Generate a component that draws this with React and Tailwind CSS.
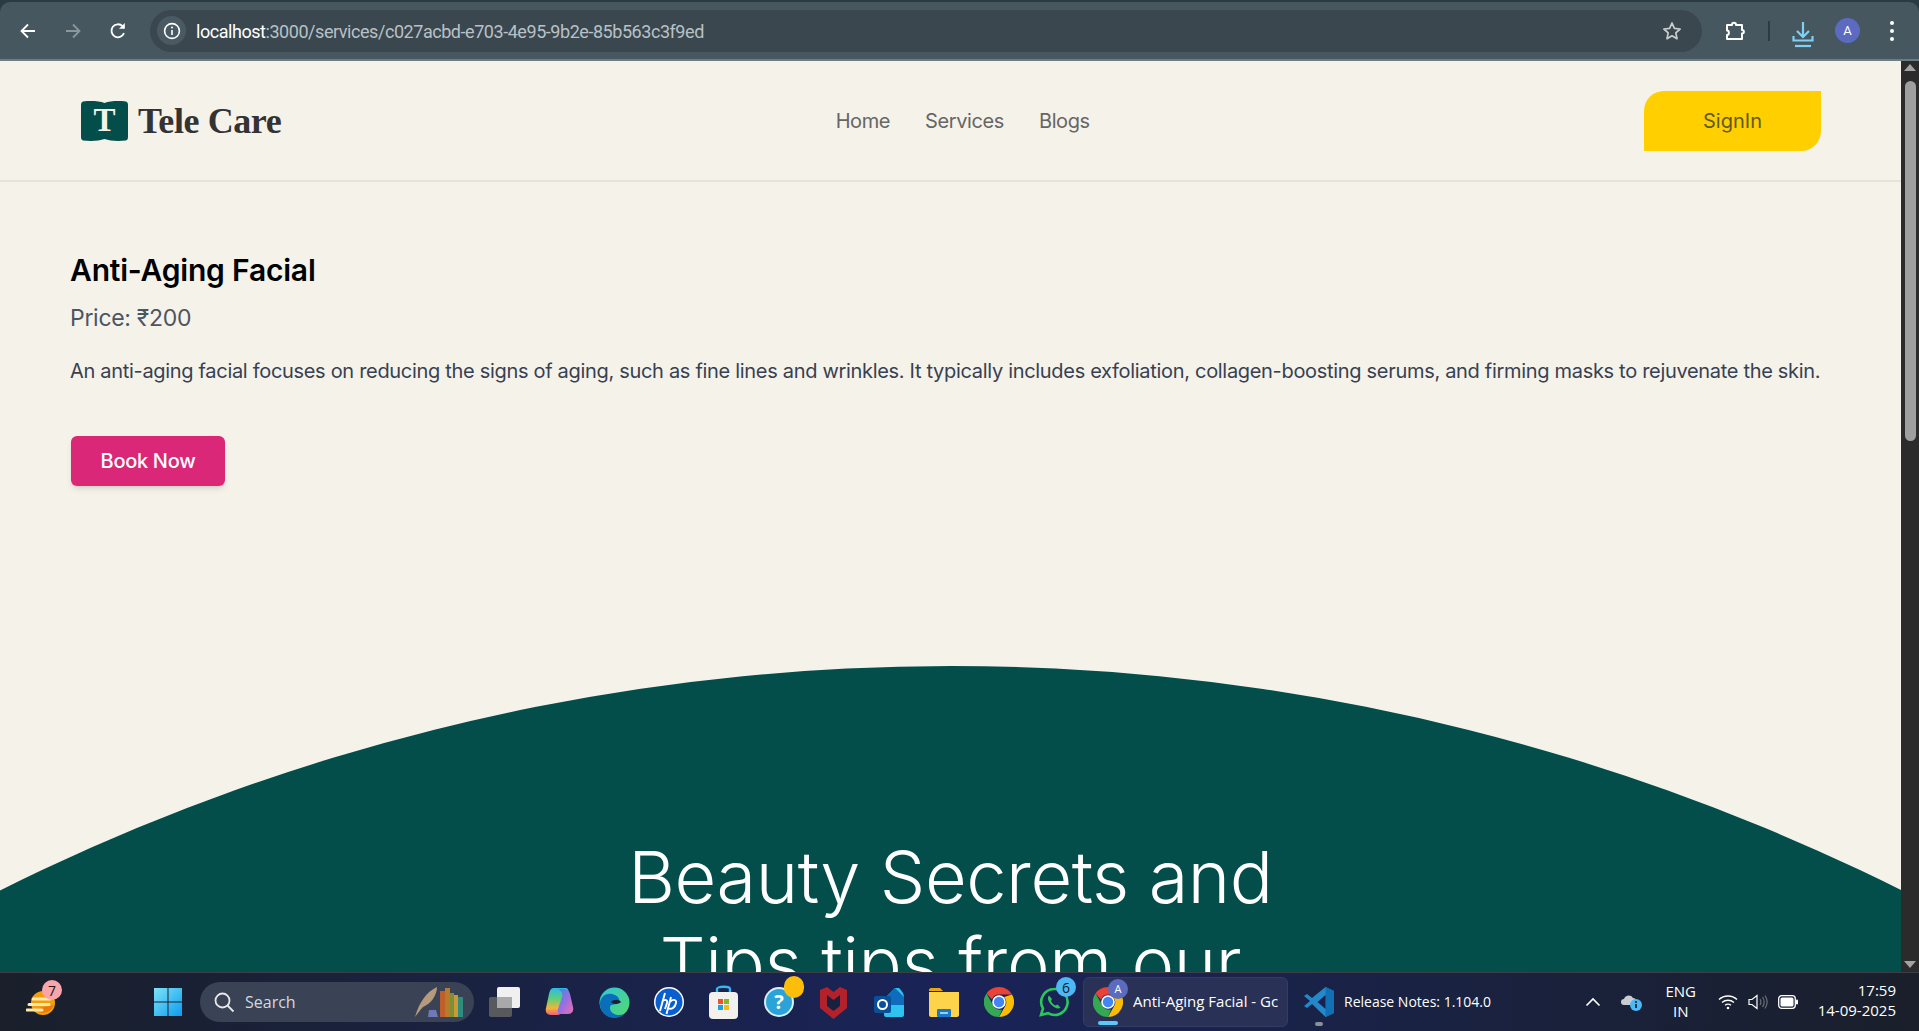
import React from "react";

// chrome toolbar icons
const BackIcon = ({ color = "#ffffff" }) => (
  <svg width="18" height="18" viewBox="0 0 18 18" fill="none" stroke={color} strokeWidth="1.8">
    <path d="M16 9H3M9 2.5 2.5 9 9 15.5" />
  </svg>
);

const ForwardIcon = () => (
  <svg width="18" height="18" viewBox="0 0 18 18" fill="none" stroke="#8b979d" strokeWidth="1.8">
    <path d="M2 9h13M9 2.5 15.5 9 9 15.5" />
  </svg>
);

const ReloadIcon = () => (
  <svg width="18" height="18" viewBox="0 0 18 18" fill="none" stroke="#ffffff" strokeWidth="1.8">
    <path d="M15 11.200A6.500 6.500 0 1 1 13.600 4.200L15 5.800" />
    <path d="M15.800 1v5.800H10" fill="#ffffff" stroke="none" />
  </svg>
);

const InfoIcon = () => (
  <svg width="18" height="18" viewBox="0 0 18 18" fill="none" stroke="#ffffff" strokeWidth="1.6">
    <circle cx="9" cy="9" r="7.4" />
    <path d="M9 8v5" />
    <circle cx="9" cy="5.4" r="1" fill="#ffffff" stroke="none" />
  </svg>
);

const StarIcon = () => (
  <svg width="20" height="20" viewBox="0 0 20 20" fill="none" stroke="#c9cdcf" strokeWidth="1.7" strokeLinejoin="round">
    <path d="m10 2 2.4 5.4 5.7.6-4.3 3.9 1.2 5.8L10 14.8l-5 2.9 1.2-5.8L1.900 8l5.700-.6Z" />
  </svg>
);

const PuzzleIcon = () => (
  <svg width="22" height="22" viewBox="0 0 22 22" fill="none" stroke="#ffffff" strokeWidth="2" strokeLinejoin="round">
    <path d="M3 5h5c0-3 4-3 4 0h6v5c2.500 0 2.500 3.500 0 3.500V19H3v-4c2.500 0 2.500-4.500 0-4.500Z" />
  </svg>
);

const DownloadIcon = () => (
  <svg width="24" height="28" viewBox="0 0 24 28" fill="none" stroke="#7fd0f5" strokeWidth="2.200">
    <path d="M12 2v14M6 11l6 6 6-6" />
    <path d="M2.500 16v4.500h19V16" />
    <path d="M4 26h16" />
  </svg>
);

// taskbar icons
const WeatherIcon = () => (
  <div className="relative w-[30px] h-[30px]">
    <svg width="30" height="30" viewBox="0 0 30 30">
      <circle cx="17" cy="16" r="12" fill="#f59e0b" />
      <path d="M8 22a12 12 0 0 0 20-4Z" fill="#ea7a0b" />
      <path d="M7 12h17M3 17.500h20M1 23h15" stroke="#fde9a9" strokeWidth="3" strokeLinecap="round" />
    </svg>
    <div className="absolute top-[-7px] right-[-6px] w-[20px] h-[20px] rounded-full bg-[#f8a5ab] flex items-center justify-center text-[14px] text-[#1a1a1a] font-['Open_Sans',sans-serif]">7</div>
  </div>
);

const WindowsIcon = () => (
  <svg width="30" height="30" viewBox="0 0 30 30">
    <defs>
      <linearGradient id="win" x1="0" y1="0" x2="1" y2="1">
        <stop offset="0" stopColor="#7ee3f7" />
        <stop offset="1" stopColor="#0c9cf0" />
      </linearGradient>
    </defs>
    <path d="M1 1h13.500v13.500H1ZM15.500 1H29v13.500H15.500ZM1 15.500h13.500V29H1ZM15.500 15.500H29V29H15.500Z" fill="url(#win)" />
  </svg>
);

const QuillBooks = () => (
  <svg width="50" height="32" viewBox="0 0 50 32">
    <path d="M1 31C5 17 12 6 23 1c0 8-6 17-14 20-3 3-5 6-8 10Z" fill="#b69a7c" />
    <path d="M15 24h7l2 7h-10Z" fill="#6f78b8" />
    <rect x="26" y="5" width="5" height="26" fill="#c05f2c" />
    <rect x="31" y="2" width="5" height="29" fill="#b97a2a" />
    <rect x="36" y="7" width="4" height="24" fill="#7f8f36" />
    <rect x="40" y="9" width="4" height="22" fill="#c99a35" />
    <rect x="44" y="11" width="5" height="20" fill="#2e8d7c" />
  </svg>
);

const TaskViewIcon = () => (
  <svg width="31" height="30" viewBox="0 0 31 30">
    <rect x="0" y="10" width="23" height="20" rx="2" fill="#57595c" />
    <rect x="8" y="0" width="23" height="21" rx="2" fill="#f0f0f0" />
    <rect x="8" y="10" width="15" height="11" fill="#a9a9a9" />
  </svg>
);

const CopilotIcon = () => (
  <svg width="29" height="30" viewBox="0 0 29 30">
    <defs>
      <linearGradient id="cop" x1="0" y1="0" x2="1" y2="1">
        <stop offset="0" stopColor="#2f8fe8" />
        <stop offset="0.5" stopColor="#9a6ee0" />
        <stop offset="1" stopColor="#ee6fb0" />
      </linearGradient>
      <linearGradient id="cop2" x1="0" y1="0" x2="0" y2="1">
        <stop offset="0" stopColor="#2fb9e8" />
        <stop offset="0.4" stopColor="#5fd07a" />
        <stop offset="0.75" stopColor="#f4b43a" />
        <stop offset="1" stopColor="#ee5f7a" />
      </linearGradient>
    </defs>
    <path d="M9 1h11c3 0 4 2 3 5L18 22c-1 4-3 6-6 6H6c-4 0-6-3-5-7L4 7C5 3 6 1 9 1Z" fill="url(#cop2)" />
    <path d="M13 2h7c3 0 4 2 5 5l3 13c1 4-1 7-5 7h-7c-3 0-4-2-3-5l4-12c1-3 0-6-4-8Z" fill="url(#cop)" />
  </svg>
);

const EdgeIcon = () => (
  <svg width="31" height="31" viewBox="0 0 31 31">
    <defs>
      <linearGradient id="edge" x1="0" y1="0" x2="1" y2="1">
        <stop offset="0" stopColor="#30c7d8" />
        <stop offset="1" stopColor="#54d96a" />
      </linearGradient>
    </defs>
    <circle cx="15.500" cy="15.500" r="15" fill="url(#edge)" />
    <path d="M1 15C3 7 10 5 16 8c5 2 6 8 1 9-3 1-6 0-6 4 0 5 7 9 14 6-3 3-6 4-10 4C7 31 0 24 1 15Z" fill="#0a6fb8" />
    <path d="M12 15c3-3 8-3 10 0-1 2-8 3-10 0Z" fill="#1b1f35" />
  </svg>
);

const HpIcon = () => (
  <svg width="30" height="30" viewBox="0 0 30 30">
    <circle cx="15" cy="15" r="15" fill="#ffffff" />
    <circle cx="15" cy="15" r="13.500" fill="#0a5fd0" />
    <path d="M11 6 6 24M8 15c2-3 6-3 5 1l-2 6M17 10l-4.500 17M16 15c2-3 7-3 6 1-1 5-5 7-8 5" fill="none" stroke="#ffffff" strokeWidth="1.900" />
  </svg>
);

const StoreIcon = () => (
  <svg width="29" height="34" viewBox="0 0 29 34">
    <path d="M8 9V4c0-3 13-3 13 0v5" fill="none" stroke="#35b8f2" strokeWidth="2.400" />
    <rect x="0" y="7" width="29" height="27" rx="4" fill="#f3f1ee" />
    <rect x="9" y="14" width="5" height="5" fill="#f2512f" />
    <rect x="15" y="14" width="5" height="5" fill="#7cbb2c" />
    <rect x="9" y="20" width="5" height="5" fill="#14a3ee" />
    <rect x="15" y="20" width="5" height="5" fill="#fdb813" />
  </svg>
);

const HelpIcon = () => (
  <div className="relative w-[30px] h-[30px]">
    <svg width="30" height="30" viewBox="0 0 30 30">
      <circle cx="15" cy="15" r="14" fill="#2aa3d8" stroke="#d8eef8" strokeWidth="2" />
      <text x="15" y="22" fontSize="20" fontWeight="700" fill="#ffffff" textAnchor="middle" fontFamily="Open Sans">?</text>
    </svg>
    <div className="absolute top-[-11px] right-[-10px] w-[20px] h-[22px] rounded-full bg-[#fdbd0a]" />
  </div>
);

const McafeeIcon = () => (
  <svg width="27" height="34" viewBox="0 0 27 34">
    <path d="M0 5 7 2l6.500 5L20 2l7 3v18l-13.500 11L0 23Z" fill="#b3222a" />
    <path d="m7 10 6.500 5L20 10v11l-6.500 5L7 21Z" fill="#1a2040" />
  </svg>
);

const OutlookIcon = () => (
  <svg width="30" height="30" viewBox="0 0 30 30">
    <path d="M10 12 21 1h4c3 3 5 6 5 9v18c0 1-1 2-2 2H12c-1 0-2-1-2-2Z" fill="#2cc4ee" />
    <path d="M21 1 10 12v6h20v-8Z" fill="#0f6cbd" />
    <rect x="0" y="9" width="17" height="17" rx="2" fill="#0a4f9a" />
    <circle cx="8.500" cy="17.500" r="4.500" fill="none" stroke="#ffffff" strokeWidth="2" />
  </svg>
);

const FilesIcon = () => (
  <svg width="30" height="30" viewBox="0 0 30 30">
    <path d="M0 3c0-1 1-2 2-2h9l3 3h-14Z" fill="#e9a80c" />
    <path d="M0 5h30v23c0 1-1 2-2 2H2c-1 0-2-1-2-2Z" fill="#fdd34b" />
    <rect x="8" y="22" width="14" height="8" rx="1" fill="#1a77c9" />
    <rect x="11" y="25" width="8" height="2" fill="#8fd0f5" />
  </svg>
);

const ChromeIcon = ({ size = 30 }) => (
  <svg width={size} height={size} viewBox="0 0 30 30">
    <path d="M15 0a15 15 0 0 1 13 7.500H15a7.500 7.500 0 0 0-7 5L2.500 6.500A15 15 0 0 1 15 0Z" fill="#ea4335" />
    <path d="M28 7.500A15 15 0 0 1 15 30l6.500-11.500A7.500 7.500 0 0 0 20 10Z" fill="#fbbc04" />
    <path d="M2.500 6.500 9 18a7.500 7.500 0 0 0 9 4.500L15 30A15 15 0 0 1 2.500 6.500Z" fill="#34a853" />
    <circle cx="15" cy="15" r="6" fill="#4285f4" stroke="#ffffff" strokeWidth="1.600" />
  </svg>
);

const WhatsappIcon = () => (
  <div className="relative w-[30px] h-[30px]">
    <svg width="30" height="30" viewBox="0 0 30 30" fill="none">
      <path d="M15 2a13 13 0 0 0-11 19.500L2 28l7-1.800A13 13 0 1 0 15 2Z" stroke="#29c65a" strokeWidth="2.600" />
      <path d="M10 8.500c-2 2-1 6 2.500 9.500s7 4.500 9 2.500l-3-3-2 1c-2-1-3.500-2.500-4.500-4.500l1-2Z" fill="#29c65a" />
    </svg>
    <div className="absolute top-[-10px] right-[-7px] w-[20px] h-[20px] rounded-full bg-[#4cb8f5] flex items-center justify-center text-[14px] text-[#10182b] font-['Open_Sans',sans-serif]">6</div>
  </div>
);

const VscodeIcon = () => (
  <svg width="30" height="30" viewBox="0 0 30 30">
    <path d="M21.500 0 30 4v22l-8.500 4L8 17l-5 4-3-2 6-5-6-5 3-2 5 4Z" fill="#2489ca" />
    <path d="M21.500 0 30 4v22l-8.500 4Z" fill="#1070b3" />
    <path d="M21.500 8v14l-8-7Z" fill="#1a2150" />
  </svg>
);

const CloudInfo = () => (
  <svg width="21" height="20" viewBox="0 0 21 20">
    <path d="M3 13a3 3 0 0 1 0-6c1-4 7-5 9-1 2 0 3 1 3 3v4Z" fill="#c9cdd2" />
    <circle cx="15" cy="13" r="6" fill="#4cb8f5" />
    <path d="M15 12v4" stroke="#10182b" strokeWidth="1.600" />
    <circle cx="15" cy="10" r="1" fill="#10182b" />
  </svg>
);

const WifiIcon = () => (
  <svg width="20" height="16" viewBox="0 0 20 16" fill="none" stroke="#ffffff" strokeWidth="1.300">
    <path d="M1 5.500c5-4.700 13-4.700 18 0M4 8.500c3.500-3 8.500-3 12 0M7 11.300c1.800-1.400 4.200-1.400 6 0" />
    <circle cx="10" cy="14" r="1.300" fill="#ffffff" stroke="none" />
  </svg>
);

const SpeakerIcon = () => (
  <svg width="20" height="16" viewBox="0 0 20 16" fill="none" stroke="#ffffff" strokeWidth="1.200">
    <path d="M1 5.500h3L9 1.500v13l-5-4H1Z" />
    <path d="M12 5c1.200 2 1.200 4 0 6M14.500 3c2 3 2 7 0 10M17 1.500c2.600 4 2.600 9 0 13" stroke="#6b7078" />
  </svg>
);

const BatteryIcon = () => (
  <svg width="20" height="14" viewBox="0 0 20 14">
    <rect x="0.700" y="0.700" width="16.600" height="12.600" rx="3" fill="none" stroke="#ffffff" strokeWidth="1.300" />
    <rect x="2.500" y="2.500" width="13" height="9" rx="1.500" fill="#ffffff" />
    <rect x="18" y="4.500" width="2" height="5" rx="1" fill="#ffffff" />
  </svg>
);

const ChromeBar = () => (
  <div className="h-[61px] shrink-0 bg-[#2c3a42] pt-[2px]">
    <div className="h-[59px] bg-[#46575f] rounded-t-[10px] border-b-2 border-[#6c7d86] flex items-center pl-[19px] font-['Roboto',sans-serif]">
      <BackIcon />
      <div className="ml-[27px]"><ForwardIcon /></div>
      <div className="ml-[27px]"><ReloadIcon /></div>
      <div className="ml-[23px] w-[1552px] h-[42px] rounded-full bg-[#3a474f] flex items-center pl-[7px] pr-[20px]">
        <div className="w-[29px] h-[29px] rounded-full bg-[#4a5a62] flex items-center justify-center">
          <InfoIcon />
        </div>
        <div className="ml-[10px] mt-[1px] text-[18px] tracking-[-0.45px] text-[#b9c1c6] flex-1">
          <span className="text-white">localhost</span>:3000/services/c027acbd-e703-4e95-9b2e-85b563c3f9ed
        </div>
        <StarIcon />
      </div>
      <div className="ml-[22px]"><PuzzleIcon /></div>
      <div className="ml-[22px] w-[2px] h-[20px] bg-[#2e3b43]" />
      <div className="ml-[21px] mt-[6px]"><DownloadIcon /></div>
      <div className="ml-[20px] w-[25px] h-[25px] rounded-full bg-[#5c6bc0] text-white text-[13px] flex items-center justify-center">A</div>
      <div className="ml-[30px] flex flex-col gap-[4px]">
        <span className="w-[4px] h-[4px] rounded-full bg-white" />
        <span className="w-[4px] h-[4px] rounded-full bg-white" />
        <span className="w-[4px] h-[4px] rounded-full bg-white" />
      </div>
    </div>
  </div>
);

const Logo = () => (
  <div className="flex items-center gap-[10px]">
    <div className="relative w-[47px] h-[40px] flex items-center justify-center text-[#f5f2ea] text-[33px] font-bold font-['Liberation_Serif',serif]">
      <svg className="absolute inset-0" width="47" height="40" viewBox="0 0 47 40">
        <path d="M2 0.500C10 -0.500 18 0 23.500 2 29 0 37 -0.500 45 0.500 47 1 47 3 47 5V35c0 2 0 4-2 4.500C37 40.500 29 40 23.500 38 18 40 10 40.500 2 39.500 0 39 0 37 0 35V5C0 3 0 1 2 0.500Z" fill="#034e4a" />
      </svg>
      <span className="relative">T</span>
    </div>
    <span className="text-[36px] leading-none font-bold tracking-[-0.4px] text-[#333333] font-['Liberation_Serif',serif]">Tele Care</span>
  </div>
);

const Navbar = () => (
  <nav className="h-[121px] shrink-0 border-b-2 border-[#e6e3dc] flex items-center pl-[81px] pr-[80px] justify-between">
    <Logo />
    <div className="flex gap-[35px] text-[20px] text-[#666666] tracking-[-0.4px]">
      <a>Home</a>
      <a>Services</a>
      <a>Blogs</a>
    </div>
    <button className="w-[177px] h-[60px] bg-[#ffcf00] rounded-tl-[20px] rounded-br-[20px] text-[20px] text-[#5f5a28]">SignIn</button>
  </nav>
);

const TaskIcon = ({ className, children }) => <div className={className}>{children}</div>;

const Taskbar = () => (
  <div className="h-[59px] shrink-0 border-t border-[#3c4046] bg-gradient-to-r from-[#1a1f2b] via-[#1a2358] to-[#1a1f2b] flex items-center font-['Open_Sans',sans-serif] text-white">
    <TaskIcon className="ml-[26px]"><WeatherIcon /></TaskIcon>
    <TaskIcon className="ml-[97px]"><WindowsIcon /></TaskIcon>
    <div className="ml-[17px] w-[274px] h-[40px] rounded-full bg-[#3a4256] flex items-center pl-[13px] pr-[10px]">
      <svg width="22" height="22" viewBox="0 0 22 22" fill="none" stroke="#e8e8e8" strokeWidth="1.800">
        <circle cx="9.500" cy="9.500" r="7" />
        <path d="m14.500 14.500 6 6" />
      </svg>
      <span className="ml-[10px] mb-[1px] text-[16px] text-[#d5d8de] flex-1">Search</span>
      <QuillBooks />
    </div>
    <TaskIcon className="ml-[15px]"><TaskViewIcon /></TaskIcon>
    <TaskIcon className="ml-[25px]"><CopilotIcon /></TaskIcon>
    <TaskIcon className="ml-[25px]"><EdgeIcon /></TaskIcon>
    <TaskIcon className="ml-[24px]"><HpIcon /></TaskIcon>
    <TaskIcon className="ml-[25px]"><StoreIcon /></TaskIcon>
    <TaskIcon className="ml-[26px]"><HelpIcon /></TaskIcon>
    <TaskIcon className="ml-[26px]"><McafeeIcon /></TaskIcon>
    <TaskIcon className="ml-[27px]"><OutlookIcon /></TaskIcon>
    <TaskIcon className="ml-[25px]"><FilesIcon /></TaskIcon>
    <TaskIcon className="ml-[25px]"><ChromeIcon /></TaskIcon>
    <TaskIcon className="ml-[25px]"><WhatsappIcon /></TaskIcon>
    <div className="relative ml-[14px] w-[205px] h-[50px] rounded-[6px] bg-[#2a3157] border border-[#343c63] flex items-center pl-[9px]">
      <ChromeIcon />
      <div className="absolute left-[24px] top-[1px] w-[20px] h-[20px] rounded-full bg-[#5c6bc0] text-[11px] flex items-center justify-center">A</div>
      <div className="ml-[10px] mb-[2px] w-[146px] overflow-hidden whitespace-nowrap text-[15px]">Anti-Aging Facial - Gc</div>
      <div className="absolute left-[14px] bottom-[1px] w-[20px] h-[4px] rounded-full bg-[#5ac8fa]" />
    </div>
    <div className="relative ml-[16px] flex items-center h-[50px]">
      <VscodeIcon />
      <div className="absolute left-[11px] bottom-[1px] w-[8px] h-[4px] rounded-full bg-[#8a8f99]" />
      <span className="ml-[10px] mb-[2px] text-[14px]">Release Notes: 1.104.0</span>
    </div>
    <div className="flex-1" />
    <svg width="16" height="10" viewBox="0 0 16 10" fill="none" stroke="#ffffff" strokeWidth="1.600">
      <path d="m1.500 8.500 6.500-6.500 6.500 6.500" />
    </svg>
    <div className="ml-[20px]"><CloudInfo /></div>
    <div className="ml-[21px] mb-[2px] w-[36px] text-center text-[15px] leading-[20px]">
      <div>ENG</div>
      <div>IN</div>
    </div>
    <div className="ml-[19px]"><WifiIcon /></div>
    <div className="ml-[10px]"><SpeakerIcon /></div>
    <div className="ml-[10px]"><BatteryIcon /></div>
    <div className="ml-[20px] mr-[23px] mb-[4px] text-right text-[15px] leading-[20px]">
      <div>17:59</div>
      <div>14-09-2025</div>
    </div>
  </div>
);

const Scrollbar = () => (
  <div className="w-[18px] shrink-0 bg-[#2b2b2b] flex flex-col items-center">
    <div className="mt-[3px] w-0 h-0 border-x-[6px] border-x-transparent border-b-[7px] border-b-[#a3a3a3]" />
    <div className="mt-[10px] w-[11px] h-[360px] rounded-full bg-[#9f9f9f]" />
    <div className="flex-1" />
    <div className="mb-[4px] w-0 h-0 border-x-[6px] border-x-transparent border-t-[7px] border-t-[#a3a3a3]" />
  </div>
);

export default function App() {
  return (
    <div className="h-[1031px] w-full overflow-hidden flex flex-col bg-[#f5f2ea] font-['Inter',sans-serif]">
      <ChromeBar />
      <div className="flex-1 min-h-0 flex">
        <main className="flex-1 min-w-0 overflow-hidden">
          <Navbar />
          <section className="pl-[70px] pt-[70px]">
            <h1 className="text-[30px] leading-[36px] font-semibold text-black tracking-[-0.2px]">Anti-Aging Facial</h1>
            <p className="mt-[15px] text-[23px] leading-[30px] text-[#4b5563] tracking-[-0.3px]">Price: ₹200</p>
            <p className="mt-[24px] text-[20px] leading-[28px] text-[#374151] tracking-[-0.31px] whitespace-nowrap">
              An anti-aging facial focuses on reducing the signs of aging, such as fine lines and wrinkles. It typically includes exfoliation, collagen-boosting serums, and firming masks to rejuvenate the skin.
            </p>
            <button className="mt-[51px] ml-[1px] w-[154px] h-[50px] rounded-md bg-[#db2777] text-white text-[20px] font-medium shadow-md tracking-[-0.3px]">Book Now</button>
          </section>
          <div className="mt-[180px] ml-[calc(50%-2126px)] w-[4252px] h-[2126px] rounded-t-[2126px] bg-[#034e4a] pt-[168px] text-center text-white text-[72px] leading-[86px] font-[350] tracking-[-0.4px]">
            Beauty Secrets and
            <br />
            Tips tips from our
          </div>
        </main>
        <Scrollbar />
      </div>
      <Taskbar />
    </div>
  );
}
